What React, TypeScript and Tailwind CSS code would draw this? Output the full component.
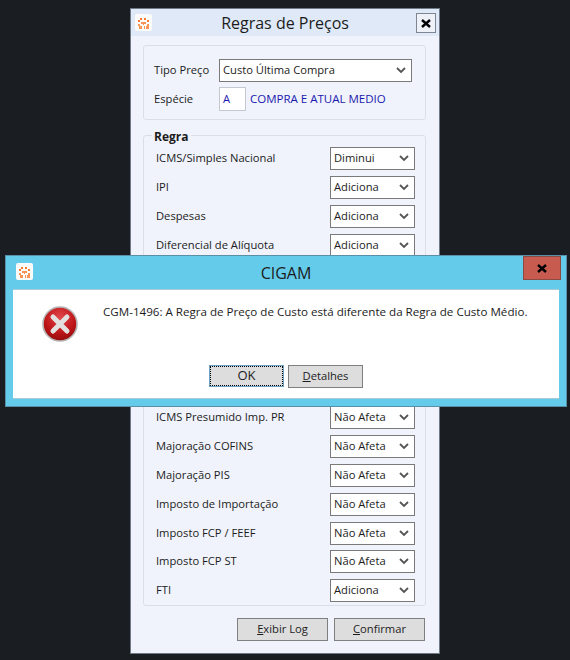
const font = { fontFamily: '"Open Sans", "Noto Sans", sans-serif' }

function Logo() {
  return (
    <span className="flex h-[17px] w-[17px] items-center justify-center rounded-[2px] bg-[#fbfbfb]">
      <svg width="11" height="12" viewBox="0 0 11 12" fill="#f97a2c">
        <path d="M0 3h2V1h2v2H2v2H0zM6 1h2v2h3v2H9V3H6z" />
        <path d="M3 5h5v2H3zM0 7h2v2H0zM5 7h1v1H5zM9 7h2v2H9zM1 9h3v3H1zM6 9h1v3H6zM8 9h3v3H8z" opacity="0.8" />
      </svg>
    </span>
  )
}

function Chevron() {
  return (
    <svg width="10" height="7" viewBox="0 0 10 7" fill="none" stroke="#555" strokeWidth="1.8">
      <path d="M1 1l4 4 4-4" />
    </svg>
  )
}

function Select({ value, className }: { value: string; className?: string }) {
  return (
    <div
      className={`flex items-center justify-between border border-[#7a7a7a] bg-white pl-[3px] pr-[5px] text-[#1c1c1c] ${className}`}
    >
      <span>{value}</span>
      <Chevron />
    </div>
  )
}

function Button({ hot, rest, className }: { hot: string; rest: string; className?: string }) {
  return (
    <button
      className={`flex h-[23px] items-center justify-center border border-[#7f7f7f] bg-[#dddddd] text-[11.2px] text-[#1c1c1c] ${className}`}
    >
      <u>{hot}</u>
      {rest}
    </button>
  )
}

const topRows = [
  ['ICMS/Simples Nacional', 'Diminui'],
  ['IPI', 'Adiciona'],
  ['Despesas', 'Adiciona'],
  ['Diferencial de Alíquota', 'Adiciona'],
]

const bottomRows = [
  ['ICMS Presumido Imp. PR', 'Não Afeta'],
  ['Majoração COFINS', 'Não Afeta'],
  ['Majoração PIS', 'Não Afeta'],
  ['Imposto de Importação', 'Não Afeta'],
  ['Imposto FCP / FEEF', 'Não Afeta'],
  ['Imposto FCP ST', 'Não Afeta'],
  ['FTI', 'Adiciona'],
]

function Row({ label, value }: { label: string; value: string }) {
  return (
    <div className="flex h-[28.8px] items-center justify-between">
      <span>{label}</span>
      <Select value={value} className="h-[23px] w-[85px]" />
    </div>
  )
}

export default function App() {
  return (
    <div
      style={font}
      className="relative h-[660px] w-[570px] overflow-hidden bg-[#1a1d21] pt-[8px] text-[11.2px] text-[#1c1c1c]"
    >
      {/* Back window */}
      <div className="ml-[130px] flex h-[646px] w-[310px] flex-col border border-[#6f7a86] bg-[#f0f3fb]">
        <div className="relative flex h-[27px] shrink-0 items-center justify-center bg-[#dfe9f8] text-[16px]">
          <span className="absolute left-[4px] top-[5px]">
            <Logo />
          </span>
          Regras de Preços
          <span className="absolute right-[3px] top-[4px] flex h-[20px] w-[20px] items-center justify-center border border-[#7d8794] bg-[#eef1f8]">
            <svg width="10" height="9" viewBox="0 0 10 9" stroke="#000" strokeWidth="2.4">
              <path d="M1 1l8 7M9 1l-8 7" />
            </svg>
          </span>
        </div>

        <div className="ml-[12px] mr-[13px] mt-[9px] flex h-[75px] flex-col rounded-[3px] border border-[#d9dfe9] pl-[10px] pt-[13px]">
          <div className="flex items-center">
            <span className="w-[65px]">Tipo Preço</span>
            <Select value="Custo Última Compra" className="h-[23px] w-[193px]" />
          </div>
          <div className="mt-[5px] flex items-center">
            <span className="w-[65px]">Espécie</span>
            <div className="flex h-[24px] w-[27px] items-center border border-[#c4c8d0] bg-white pl-[3px] text-[#1a1ab0]">
              A
            </div>
            <span className="ml-[4px] text-[11.5px] text-[#1a1ab0]">COMPRA E ATUAL MEDIO</span>
          </div>
        </div>

        <div className="relative ml-[12px] mr-[13px] mt-[15px] h-[471px] rounded-[3px] border border-[#d9dfe9] pl-[12px] pr-[10px] pt-[8.3px]">
          <span className="absolute left-[8px] top-[-8px] bg-[#f0f3fb] px-[2px] text-[12px] font-bold">Regra</span>
          {topRows.map(([label, value]) => (
            <Row key={label} label={label} value={value} />
          ))}
          {/* rows covered by the dialog */}
          <div className="h-[144px]" />
          {bottomRows.map(([label, value]) => (
            <Row key={label} label={label} value={value} />
          ))}
        </div>

        <div className="mx-[12px] mt-[12px] flex justify-end gap-[6px] pr-[2px]">
          <Button hot="E" rest="xibir Log" className="w-[91px]" />
          <Button hot="C" rest="onfirmar" className="w-[91px]" />
        </div>
      </div>

      {/* CIGAM dialog */}
      <div className="absolute left-[5px] top-[255px] flex h-[152px] w-[562px] flex-col border border-[#5a8fa8] bg-[#65cbeb]">
        <div className="relative flex h-[33px] shrink-0 items-center justify-center text-[16px]">
          <span className="absolute left-[10px] top-[7px]">
            <Logo />
          </span>
          CIGAM
          <span className="absolute right-[5px] top-0 flex h-[24px] w-[38px] items-center justify-center border border-[#8c4a42] bg-[#c75b50]">
            <svg width="10" height="9" viewBox="0 0 10 9" stroke="#000" strokeWidth="2.4">
              <path d="M1 1l8 7M9 1l-8 7" />
            </svg>
          </span>
        </div>
        <div className="mx-[7px] flex h-[110px] flex-col border-y border-y-[#a9c9d6] bg-white">
          <div className="flex flex-1 items-start">
            <svg width="36" height="36" viewBox="0 0 36 36" className="ml-[29px] mt-[16px]">
              <defs>
                <radialGradient id="err" cx="50%" cy="30%" r="75%">
                  <stop offset="0%" stopColor="#e2474a" />
                  <stop offset="60%" stopColor="#bd1518" />
                  <stop offset="100%" stopColor="#8e0a0c" />
                </radialGradient>
              </defs>
              <circle cx="18" cy="18" r="17" fill="url(#err)" stroke="#b5b5b5" strokeWidth="1.6" />
              <path d="M11 11l14 14M25 11l-14 14" stroke="#e4e0e0" strokeWidth="5" strokeLinecap="round" />
            </svg>
            <p className="ml-[25px] mt-[13px] text-[11.6px]">
              CGM-1496: A Regra de Preço de Custo está diferente da Regra de Custo Médio.
            </p>
          </div>
          <div className="mb-[10px] ml-[196px] flex gap-[4px]">
            <button className="flex h-[22px] w-[75px] items-center justify-center border border-[#6da2c7] bg-[#dddddd] text-[13px] outline-1 -outline-offset-2 outline-dotted outline-black">
              OK
            </button>
            <Button hot="D" rest="etalhes" className="h-[22px] w-[75px]" />
          </div>
        </div>
      </div>
    </div>
  )
}
